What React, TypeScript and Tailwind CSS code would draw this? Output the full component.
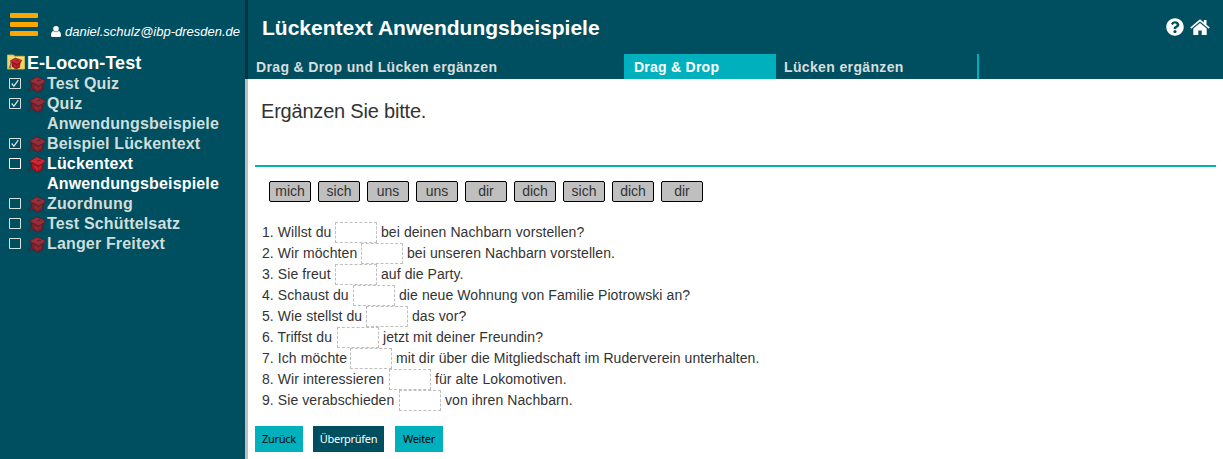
import React from "react";
import { FaQuestionCircle } from "react-icons/fa";

type Lesson = { lines: string[]; done?: boolean; active?: boolean };

const lessons: Lesson[] = [
  { lines: ["Test Quiz"], done: true },
  { lines: ["Quiz", "Anwendungsbeispiele"], done: true },
  { lines: ["Beispiel Lückentext"], done: true },
  { lines: ["Lückentext", "Anwendungsbeispiele"], active: true },
  { lines: ["Zuordnung"] },
  { lines: ["Test Schüttelsatz"] },
  { lines: ["Langer Freitext"] },
];

const words = ["mich", "sich", "uns", "uns", "dir", "dich", "sich", "dich", "dir"];

type Sentence = { before: string; after: string; width: number };

const sentences: Sentence[] = [
  { before: "1. Willst du", after: "bei deinen Nachbarn vorstellen?", width: 69 },
  { before: "2. Wir möchten", after: "bei unseren Nachbarn vorstellen.", width: 95 },
  { before: "3. Sie freut", after: "auf die Party.", width: 69 },
  { before: "4. Schaust du", after: "die neue Wohnung von Familie Piotrowski an?", width: 87 },
  { before: "5. Wie stellst du", after: "das vor?", width: 100 },
  { before: "6. Triffst du", after: "jetzt mit deiner Freundin?", width: 71 },
  { before: "7. Ich möchte", after: "mit dir über die Mitgliedschaft im Ruderverein unterhalten.", width: 84 },
  { before: "8. Wir interessieren", after: "für alte Lokomotiven.", width: 123 },
  { before: "9. Sie verabschieden", after: "von ihren Nachbarn.", width: 133 },
];

function CapShape({ active }: { active?: boolean }) {
  return (
    <>
      <path d="M4.600 6.500 4.800 12.500 10.300 16.400 15.300 14 16.300 7z" fill={active ? "#b3121e" : "#7d222d"} stroke="#551823" strokeWidth=".8" strokeLinejoin="round" />
      <path d="M2.200 5.300 9.500.8 18.400 4.400 16.600 7.300 11.500 9.800z" fill={active ? "#cf2632" : "#94303a"} stroke="#5c1a25" strokeWidth=".8" strokeLinejoin="round" />
      <path d="m10.200 5 2-.9 1.500.8" stroke="#4f1822" strokeWidth=".8" fill="none" />
      <path d="m7.500 10.500 2.500 1.500.2 2M13.500 10.500l-1 2" stroke={active ? "#e04a52" : "#a5424b"} strokeWidth=".7" fill="none" />
      <path d="M3.400 6.500 2.500 11.500M2.200 11.500.8 15.500M2.700 11.500l.5 4.300" stroke="#3b2b39" strokeWidth=".9" fill="none" />
    </>
  );
}

function CapIcon({ active }: { active?: boolean }) {
  return (
    <svg viewBox="0 0 19 17" className="h-[17px] w-[19px] shrink-0">
      <CapShape active={active} />
    </svg>
  );
}

function FolderIcon() {
  return (
    <svg viewBox="0 0 18 16" className="h-4 w-[18px] shrink-0">
      <path d="M.5 1h6l1.300 1.300h9.700v12.700H.5z" fill="#f0d560" stroke="#dcc04a" strokeWidth=".8" />
      <path d="M1 3.500h16" stroke="#fbe98c" />
      <g transform="translate(1.500 3.300) scale(.72)"><CapShape active /></g>
    </svg>
  );
}

function HomeIcon() {
  return (
    <svg viewBox="0 0 20 17" className="h-[17px] w-5 fill-white">
      <path d="M10 .3 13.800 3.500V1h2.700v4.800L19.800 8.600 18.800 9.800 10 2.500 1.200 9.800.2 8.600z" />
      <path d="M10 4 16.700 9.500V16H11.700V11.500H8.300V16H3.300V9.500z" />
    </svg>
  );
}

function Check({ done, active }: { done?: boolean; active?: boolean }) {
  return (
    <svg viewBox="0 0 12 12" className={`h-3 w-3 shrink-0 ${active ? "text-white" : "text-[#d5e3df]"}`} fill="none" stroke="currentColor">
      <path d="M.5.5h11v10H.5z" />
      {done && <path d="m2.700 5.500 2.200 2.700 4.400-6" strokeWidth="1.300" />}
    </svg>
  );
}

function Sidebar() {
  return (
    <aside className="h-full w-[245px] shrink-0 bg-[#004f60]">
      <div className="flex h-[53px] pl-2.5">
        <svg viewBox="0 0 28 24" className="mt-[13px] h-6 w-7 shrink-0 fill-[#ffa500]">
          <rect width="28" height="5" rx="1" />
          <rect y="9" width="28" height="5" rx="1" />
          <rect y="18" width="28" height="5" rx="1" />
        </svg>
        <svg viewBox="0 0 10 11" className="mt-[26px] ml-[13px] h-[11px] w-2.5 shrink-0 fill-white">
          <circle cx="5" cy="2.800" r="2.800" />
          <path d="M2.200 5C.7 5.400 0 7 0 9.200 0 10.300.6 11 1.600 11h6.800c1 0 1.600-.7 1.600-1.800C10 7 9.300 5.400 7.800 5 6.200 6.500 3.800 6.500 2.200 5z" />
        </svg>
        <span className="mt-6 ml-1 text-[13px] leading-4 whitespace-nowrap text-white italic">daniel.schulz@ibp-dresden.de</span>
      </div>
      <div className="flex h-[21px] pl-[7px] text-[18px] leading-5 font-bold tracking-[0.05px] text-white">
        <span className="pt-px"><FolderIcon /></span>
        <span className="ml-0.5">E-Locon-Test</span>
      </div>
      <ul>
        {lessons.map((l) => (
          <li key={l.lines.join(" ")} className={`flex pl-[9px] text-base leading-5 font-bold tracking-[0.16px] ${l.active ? "text-white" : "text-[#cfdedb]"}`}>
            <span className="flex h-5 w-[38px] items-center gap-[6px]">
              <Check done={l.done} active={l.active} />
              <CapIcon active={l.active} />
            </span>
            <span>{l.lines.map((line) => <span key={line} className="block">{line}</span>)}</span>
          </li>
        ))}
      </ul>
    </aside>
  );
}

function Header() {
  return (
    <header className="flex h-[79px] flex-col bg-[#004f60] font-bold">
      <div className="flex h-[54px] items-center justify-between pr-[13px] pl-3.5">
        <h1 className="pt-0.5 text-[21px] leading-6 text-white">Lückentext Anwendungsbeispiele</h1>
        <div className="flex items-center gap-1.5 text-white">
          <FaQuestionCircle className="size-[18px]" />
          <HomeIcon />
        </div>
      </div>
      <nav className="flex h-[25px] text-[14px] leading-[27px] tracking-[0.36px] text-[#d9dddd]">
        <span className="w-[376px] pl-2">Drag &amp; Drop und Lücken ergänzen</span>
        <span className="w-[152px] bg-[#00b1bd] pl-2.5 tracking-[0.25px] text-white">Drag &amp; Drop</span>
        <span className="w-[203px] border-r-2 border-[#00b1bd] pl-2">Lücken ergänzen</span>
      </nav>
    </header>
  );
}

export default function App() {
  return (
    <div className="flex h-[459px] w-[1223px] overflow-hidden bg-white font-['Liberation_Sans',Arial,sans-serif] text-[#333]">
      <Sidebar />
      <div className="flex w-[3px] shrink-0 flex-col">
        <div className="h-[79px] bg-[#003442]" />
        <div className="flex-1 bg-[#bfbfbf]" />
      </div>
      <div className="flex min-w-0 flex-1 flex-col">
        <Header />
        <main className="px-[7px]">
          <div className="h-[88px] border-b-2 border-[#00b1bd] pt-5 pl-1.5 text-[20px] leading-6 tracking-[-0.2px]">Ergänzen Sie bitte.</div>
          <div className="flex gap-[7px] pt-3.5 pl-3.5">
            {words.map((w, i) => (
              <span key={i} className="h-[21px] w-[42px] rounded-xs border border-black bg-[#bfbfbf] text-center text-[14px] leading-[19px]">{w}</span>
            ))}
          </div>
          <div className="pt-5 pl-[7px] text-[14px] leading-[21px] tracking-[0.08px]">
            {sentences.map((s) => (
              <div key={s.before} className="flex h-[21px] whitespace-nowrap">
                <span className="shrink-0" style={{ width: s.width }}>{s.before}</span>
                <span className="mx-1 h-[21px] w-[42px] border border-dashed border-[#bfbfbf]" />
                <span>{s.after}</span>
              </div>
            ))}
          </div>
          <div className="mt-[15px] flex font-['Noto_Sans','Open_Sans',sans-serif] text-[11px] leading-[26px] tracking-[-0.3px]">
            <button className="h-[26px] w-12 bg-[#00b1bd] text-black">Zurück</button>
            <button className="ml-2.5 h-[26px] w-[71px] bg-[#004f60] text-white">Überprüfen</button>
            <button className="ml-[11px] h-[26px] w-12 bg-[#00b1bd] text-black">Weiter</button>
          </div>
        </main>
      </div>
    </div>
  );
}
